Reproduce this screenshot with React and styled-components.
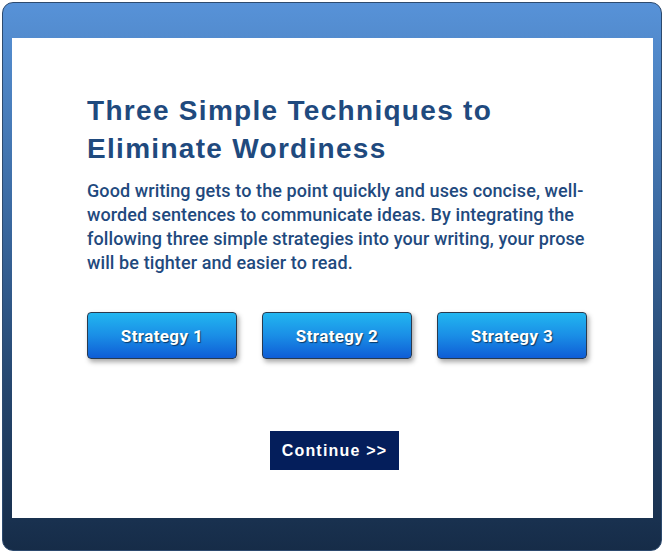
import React from "react";
import styled, { createGlobalStyle } from "styled-components";

const Global = createGlobalStyle`
  html, body { margin: 0; padding: 0; background: #ffffff; }
  body { width: 664px; height: 553px; overflow: hidden; }
`;

const Page = styled.div`
  width: 664px;
  height: 553px;
  padding: 2px 2px 2px 2px;
  box-sizing: border-box;
`;

const Frame = styled.div`
  height: 100%;
  box-sizing: border-box;
  border: 1px solid #2d4a6e;
  border-radius: 11px;
  background: linear-gradient(to bottom, #5792d8 0%, #4f86c6 12%, #3a689f 40%, #26476f 70%, #162c48 100%);
  padding: 35px 8px 32px 9px;
  display: flex;
`;

const Panel = styled.div`
  flex: 1;
  background: #ffffff;
  padding: 54px 60px 0 75px;
  display: flex;
  flex-direction: column;
`;

const Title = styled.h1`
  margin: 0;
  font-family: "Liberation Sans", Arial, sans-serif;
  font-weight: 700;
  font-size: 28px;
  line-height: 38px;
  letter-spacing: 1.3px;
  color: #1f4a7e;
`;

const Body = styled.p`
  margin: 11px 0 0 0;
  font-family: "Roboto", "Liberation Sans", sans-serif;
  font-weight: 500;
  font-size: 18px;
  line-height: 24px;
  letter-spacing: 0.1px;
  color: #1f4a7e;
`;

const ButtonRow = styled.div`
  display: flex;
  gap: 25px;
  margin-top: 37px;
`;

const StrategyButton = styled.button`
  width: 150px;
  height: 47px;
  box-sizing: border-box;
  border: 1px solid #2a3a4e;
  border-radius: 4px;
  background: linear-gradient(to bottom, #22b6f0 0%, #1a8ee6 50%, #0f5dd6 100%);
  box-shadow: 2px 3px 5px rgba(0, 0, 0, 0.35);
  color: #ffffff;
  font-family: "Roboto", "Liberation Sans", sans-serif;
  font-weight: 700;
  font-size: 17px;
  letter-spacing: 0.4px;
  text-shadow: 1px 1px 1px rgba(0, 0, 0, 0.55);
  cursor: pointer;
  padding: 0;
`;

const ContinueRow = styled.div`
  display: flex;
  justify-content: center;
  margin-top: 72px;
  padding-right: 11px;
`;

const ContinueButton = styled.button`
  width: 129px;
  height: 39px;
  border: none;
  background: #041e5b;
  color: #ffffff;
  font-family: "Liberation Sans", Arial, sans-serif;
  font-weight: 700;
  font-size: 16px;
  letter-spacing: 1.2px;
  cursor: pointer;
  padding: 0;
`;

export default function App() {
  return (
    <Page>
      <Global />
      <Frame>
        <Panel>
          <Title>
            Three Simple Techniques to
            <br />
            Eliminate Wordiness
          </Title>
          <Body>
            Good writing gets to the point quickly and uses concise, well-worded sentences to
            communicate ideas. By integrating the following three simple strategies into your
            writing, your prose will be tighter and easier to read.
          </Body>
          <ButtonRow>
            <StrategyButton>Strategy 1</StrategyButton>
            <StrategyButton>Strategy 2</StrategyButton>
            <StrategyButton>Strategy 3</StrategyButton>
          </ButtonRow>
          <ContinueRow>
            <ContinueButton>Continue &gt;&gt;</ContinueButton>
          </ContinueRow>
        </Panel>
      </Frame>
    </Page>
  );
}
